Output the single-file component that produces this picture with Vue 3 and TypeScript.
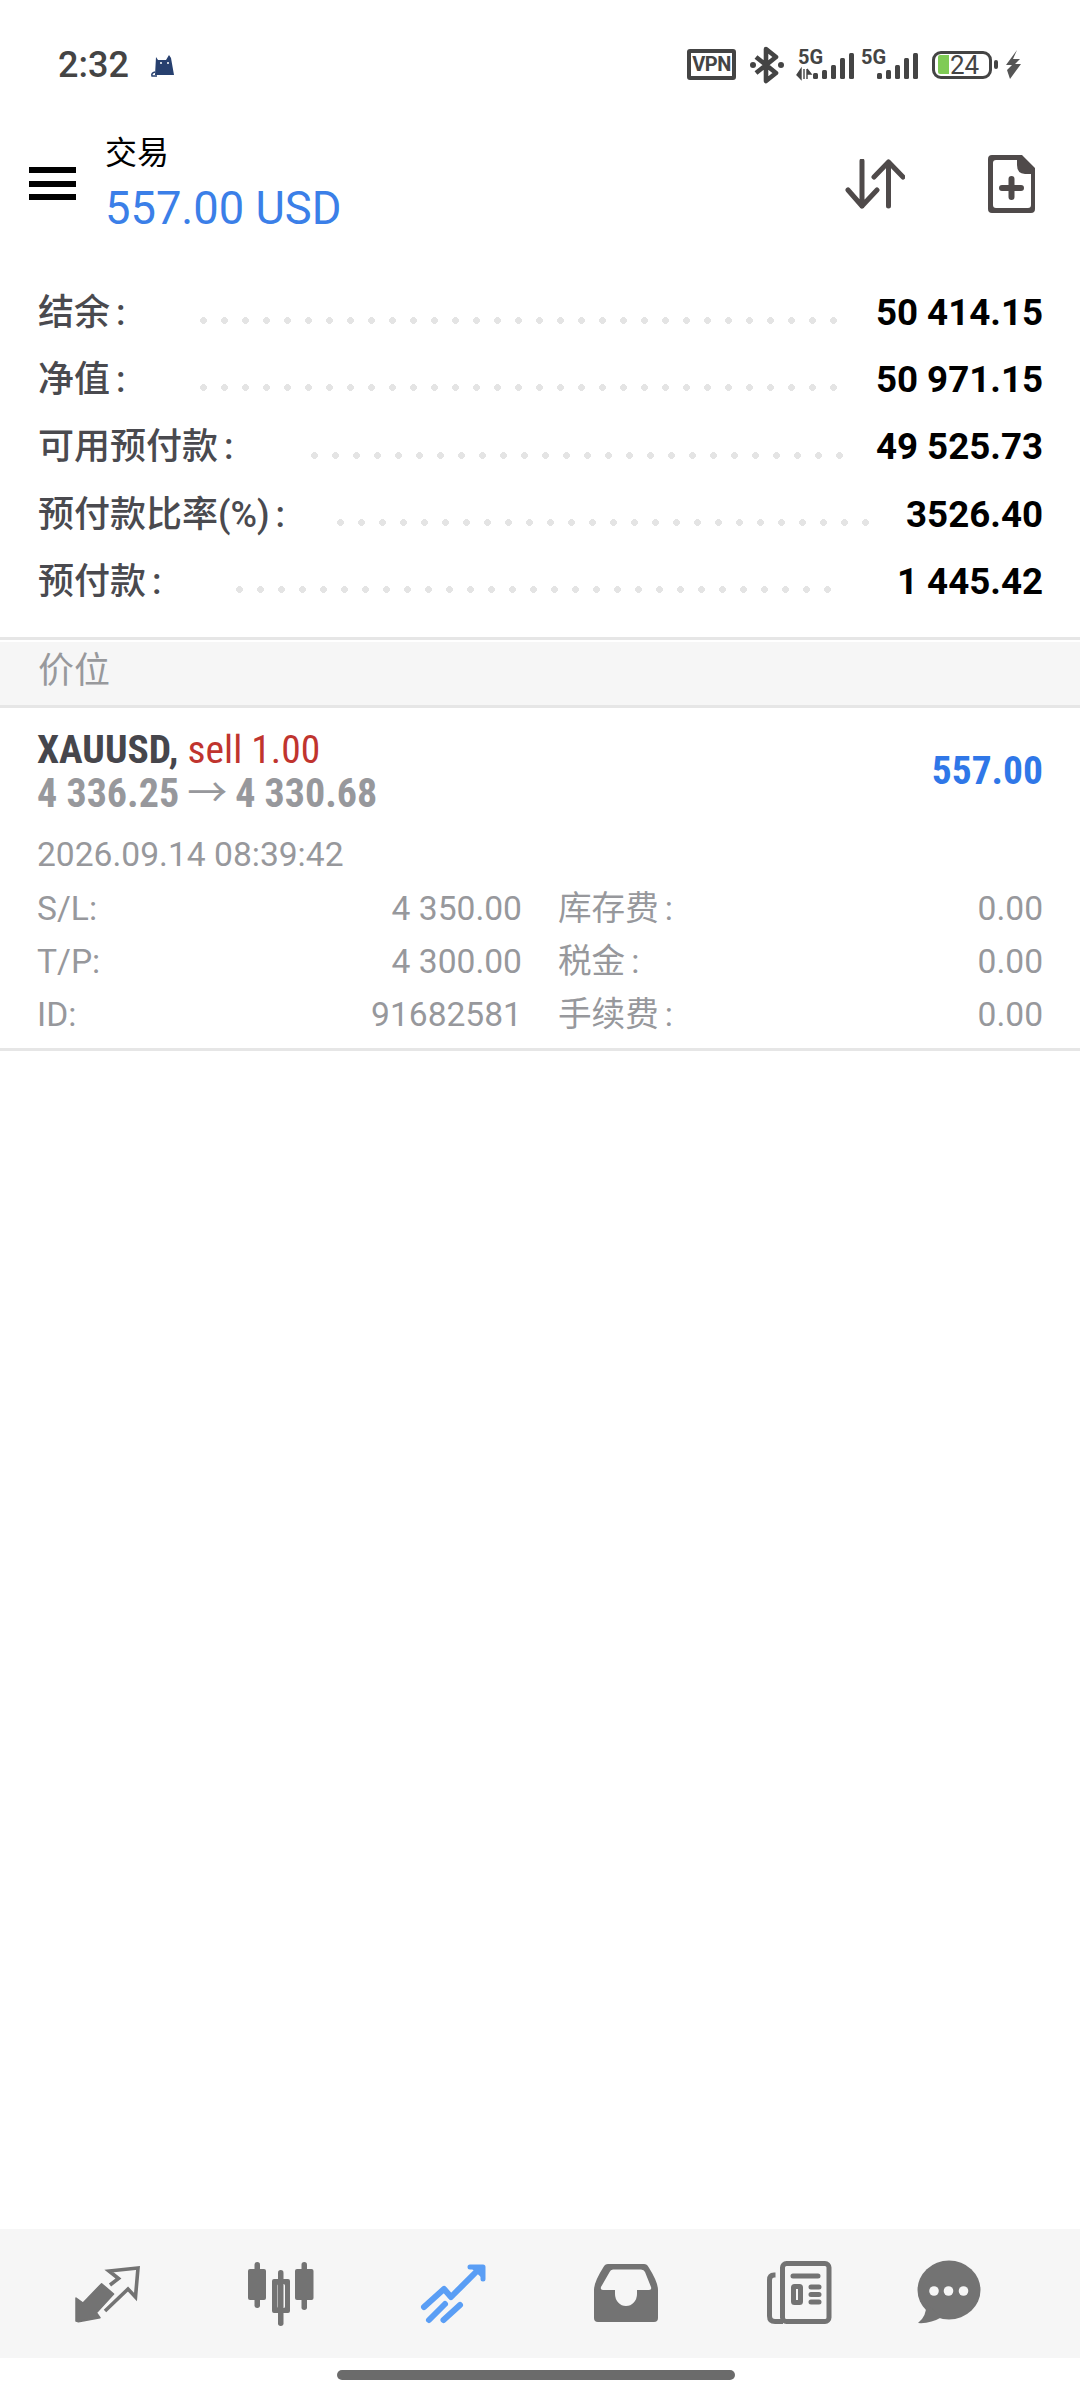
<template>
  <div class="screen">
    <!-- status bar -->
    <div class="status">
      <span class="clock">2:32</span>
      <span class="app-badge">
        <svg width="34" height="34" viewBox="0 0 34 34">
          <path d="M8 9 L10 12 H18 L21 7 L23 10 L26 27 H7 Z" fill="#27406f" />
          <path d="M7 24 Q3 25 4 28 H9" fill="none" stroke="#27406f" stroke-width="1.5" />
          <path d="M12 15 h2 M19 15 h2" stroke="#fff" stroke-width="1.4" />
        </svg>
      </span>
      <div class="status-icons">
        <span class="vpn">VPN</span>
        <svg class="bt" width="34" height="38" viewBox="0 0 34 38">
          <path d="M6 11 L26 27 L16 35 V3 L26 11 L6 27" fill="none" stroke="#444" stroke-width="4.6" stroke-linejoin="round" />
          <circle cx="3" cy="19" r="3" fill="#444" />
          <circle cx="31" cy="19" r="3" fill="#444" />
        </svg>
        <svg class="sig" width="58" height="41" viewBox="0 -6 58 41">
          <text x="2" y="14" class="sig-text">5G</text>
          <path d="M5 19 V29 L1 25 Z M8 19 V29 M11 19 V29 M11 19 L15 24 H11" fill="#444" stroke="#444" stroke-width="1.4" />
          <g fill="#444">
            <rect x="17" y="23" width="5" height="6" rx="1.5" />
            <rect x="26" y="20" width="5" height="9" rx="1.5" />
            <rect x="35" y="15" width="5" height="14" rx="1.5" />
            <rect x="44" y="8" width="5" height="21" rx="1.5" />
            <rect x="53" y="3" width="5" height="26" rx="1.5" />
          </g>
        </svg>
        <svg class="sig" width="58" height="41" viewBox="0 -6 58 41">
          <text x="1" y="14" class="sig-text">5G</text>
          <g fill="#444">
            <rect x="17" y="23" width="5" height="6" rx="1.5" />
            <rect x="26" y="20" width="5" height="9" rx="1.5" />
            <rect x="35" y="15" width="5" height="14" rx="1.5" />
            <rect x="44" y="8" width="5" height="21" rx="1.5" />
            <rect x="53" y="3" width="5" height="26" rx="1.5" />
          </g>
        </svg>
        <div class="battery">
          <span class="battery-fill"></span>
          <span class="battery-num">24</span>
        </div>
        <span class="battery-nub"></span>
        <svg class="bolt" width="17" height="29" viewBox="0 0 17 29">
          <path d="M12 0 L1 15 H7 L2 20 L5 29 L16 14 H10 L15 9 H8 Z" fill="#555" />
        </svg>
      </div>
    </div>

    <!-- top bar -->
    <header class="topbar">
      <div class="burger"><i></i><i></i><i></i></div>
      <div class="title">
        <div class="title-top">交易</div>
        <div class="title-profit">557.00 USD</div>
      </div>
      <svg class="sort" width="60" height="50" viewBox="0 0 60 50" fill="none" stroke="#4f4a4a" stroke-width="5" stroke-linecap="round" stroke-linejoin="round">
        <path d="M17 2 V47 M3 31 L17 47 L32 31" />
        <path d="M43.5 3 V47 M29 18 L43.5 3 L58 18" />
      </svg>
      <svg class="new-order" width="47" height="58" viewBox="0 0 47 58">
        <path fill="#4f4a4a" fill-rule="evenodd" d="M4 0 H34 L47 13 V54 Q47 58 43 58 H4 Q0 58 0 54 V4 Q0 0 4 0 Z M8 5 Q5 5 5 8 V50 Q5 53 8 53 H40 Q43 53 43 50 V19 H37 Q29 18.5 29 10 V5 Z" />
        <path d="M23.5 24 V42 M14 33 H33" stroke="#4f4a4a" stroke-width="6" stroke-linecap="round" />
      </svg>
    </header>

    <!-- account summary -->
    <section class="summary">
      <div v-for="row in summary" :key="row.label" class="sum-row">
        <span class="sum-label">{{ row.label }}<span class="colon">:</span></span>
        <span class="sum-dots" :style="{ marginLeft: row.gap + 'px', width: row.dots * 21 + 'px' }"></span>
        <span class="sum-value">{{ row.value }}</span>
      </div>
    </section>

    <div class="band"><span>价位</span></div>

    <!-- open position -->
    <section class="position">
      <div class="pos-head">
        <div class="pos-main">
          <div class="pos-line"><b class="sym">XAUUSD,</b> <span class="side">sell 1.00</span></div>
          <div class="pos-line prices"><b>4 336.25</b><span class="arrow">→</span><b>4 330.68</b></div>
        </div>
        <div class="pos-profit">557.00</div>
      </div>
      <div class="pos-time">2026.09.14 08:39:42</div>
      <div class="pos-grid">
        <div v-for="cell in details" :key="cell.label" class="cell">
          <span>{{ cell.label }}<span :class="{ colon: cell.cjk }">:</span></span>
          <span>{{ cell.value }}</span>
        </div>
      </div>
    </section>

    <div class="spacer"></div>

    <!-- bottom tabs -->
    <nav class="tabs">
      <svg class="tab" viewBox="0 0 64 64">
        <path d="M1 59 V36 L8 41 L26.6 21.7 L38.6 32 L21.4 50.7 L25 55.7 L3.5 59.7 Z" fill="#737373" stroke="#737373" stroke-width="1.5" stroke-linejoin="round" />
        <path d="M35 23 L43.5 16.5 L34 9 L63 6 L60.5 35 L53 27 L30 49" fill="none" stroke="#737373" stroke-width="3.6" />
      </svg>
      <svg class="tab" viewBox="0 0 64 64" fill="#737373">
        <rect x="6.5" y="0" width="5.5" height="46" rx="2.7" />
        <rect x="0" y="7" width="18" height="31" rx="2" />
        <rect x="30" y="8" width="5.5" height="56" rx="2.7" />
        <path fill-rule="evenodd" d="M26 17 H40 Q42 17 42 19 V49 Q42 51 40 51 H26 Q24 51 24 49 V19 Q24 17 26 17 Z M31 22 Q29.5 22 29.5 23.5 V44.5 Q29.5 46 31 46 H35.5 Q37 46 37 44.5 V23.5 Q37 22 35.5 22 Z" />
        <rect x="53.5" y="0" width="5.5" height="48" rx="2.7" />
        <rect x="47" y="7" width="18.5" height="31" rx="2" />
      </svg>
      <svg class="tab" viewBox="0 0 64 64" fill="none" stroke="#5a9ef5" stroke-width="6" stroke-linecap="round" stroke-linejoin="round">
        <path d="M3 45 L23 27 L30 35 L58 7" />
        <path d="M49 5 H62 V17" stroke-width="5" fill="#5a9ef5" />
        <path d="M8 58 L24 42 M22.5 58 L39 43" />
      </svg>
      <svg class="tab" viewBox="0 0 64 64">
        <path fill="#737373" fill-rule="evenodd" d="M14 2 H50 Q53 2 54.5 5 Q64 20 64 28 V56 Q64 60 60 60 H4 Q0 60 0 56 V28 Q0 20 9.5 5 Q11 2 14 2 Z M19 7.5 Q16.5 7.5 15.6 10 L7 25 Q6 28 9 28 H21 V32 A11 12 0 0 0 43 32 V28 H55 Q58 28 57 25 L51 10 Q50 7.5 47 7.5 Z" />
      </svg>
      <svg class="tab" viewBox="0 0 64 64" fill="none" stroke="#737373" stroke-width="5">
        <rect x="15.5" y="1.5" width="46.5" height="58" rx="4" />
        <path d="M8.5 13 H7 Q2.5 13 2.5 18 V54 Q2.5 59.5 8 59.5 H16" />
        <path d="M26 14 H51 M44 25 H52 M44 32.5 H52 M44 40 H52" stroke-linecap="round" />
        <rect x="26.5" y="24.5" width="7" height="16" rx="1" stroke-width="5" />
      </svg>
      <svg class="tab tab-chat" viewBox="0 0 64 64">
        <ellipse cx="31" cy="28" rx="31.5" ry="29.5" fill="#737373" />
        <path d="M8 42 Q9 54 0 61 Q12 62 24 55 Z" fill="#737373" />
        <circle cx="16" cy="29" r="4.8" fill="#f6f6f6" />
        <circle cx="30.5" cy="29" r="4.8" fill="#f6f6f6" />
        <circle cx="45.5" cy="29" r="4.8" fill="#f6f6f6" />
      </svg>
    </nav>

    <div class="home-area"><span class="home-bar"></span></div>
  </div>
</template>

<script setup lang="ts">
interface SummaryRow {
  label: string
  value: string
  gap: number
  dots: number
}

const summary: SummaryRow[] = [
  { label: '结余', value: '50 414.15', gap: 74, dots: 31 },
  { label: '净值', value: '50 971.15', gap: 74, dots: 31 },
  { label: '可用预付款', value: '49 525.73', gap: 77, dots: 26 },
  { label: '预付款比率(%)', value: '3526.40', gap: 52, dots: 26 },
  { label: '预付款', value: '1 445.42', gap: 74, dots: 29 },
]

const details = [
  { label: 'S/L', value: '4 350.00', cjk: false },
  { label: '库存费', value: '0.00', cjk: true },
  { label: 'T/P', value: '4 300.00', cjk: false },
  { label: '税金', value: '0.00', cjk: true },
  { label: 'ID', value: '91682581', cjk: false },
  { label: '手续费', value: '0.00', cjk: true },
]
</script>

<style>
html,
body {
  margin: 0;
  background: #fff;
}
</style>

<style scoped>
.screen {
  width: 1080px;
  height: 2400px;
  display: flex;
  flex-direction: column;
  background: #fff;
  font-family: Roboto, "Noto Sans CJK SC", sans-serif;
  overflow: hidden;
}

.status {
  height: 106px;
  padding: 23px 0 0 58px;
  box-sizing: border-box;
  display: flex;
  align-items: center;
  flex-shrink: 0;
}

.clock {
  font-size: 36px;
  font-weight: 500;
  color: #444;
  width: 90px;
}

.app-badge {
  width: 34px;
  height: 34px;
  display: block;
}

.status-icons {
  margin-left: auto;
  margin-right: 58px;
  display: flex;
  align-items: center;
}

.vpn {
  width: 49px;
  height: 31px;
  box-sizing: border-box;
  border: 4px solid #444;
  border-radius: 3px;
  font-size: 20px;
  font-weight: 700;
  line-height: 23px;
  text-align: center;
  color: #444;
  letter-spacing: -0.5px;
}

.bt {
  margin-left: 14px;
}

.sig {
  margin-left: 12px;
}

.sig + .sig {
  margin-left: 6px;
}

.sig-text {
  font-size: 20px;
  font-weight: 700;
  fill: #444;
  font-family: Roboto, sans-serif;
}

.battery {
  margin-left: 14px;
  width: 60px;
  height: 28px;
  box-sizing: border-box;
  border: 3.5px solid #444;
  border-radius: 9px;
  display: flex;
  align-items: center;
  padding-left: 3px;
}

.battery-fill {
  width: 11px;
  height: 19px;
  background: #7fcb55;
  border-radius: 2px 0 0 2px;
}

.battery-num {
  font-size: 26px;
  line-height: 20px;
  color: #444;
  margin-left: 1px;
}

.battery-nub {
  width: 4px;
  height: 9px;
  margin-left: 2px;
  background: #444;
  border-radius: 2px;
}

.bolt {
  margin-left: 7px;
}

.topbar {
  height: 132px;
  padding: 23px 45px 0 29px;
  box-sizing: border-box;
  display: flex;
  align-items: center;
  flex-shrink: 0;
}

.burger {
  width: 47px;
  display: flex;
  flex-direction: column;
  gap: 7.5px;
}

.burger i {
  display: block;
  height: 6px;
  background: #000;
}

.title {
  margin: 5px 0 0 29px;
  flex: 1;
}

.title-top {
  font-size: 32px;
  line-height: 40px;
  color: #000;
}

.title-profit {
  font-size: 45.3px;
  line-height: 60px;
  color: #3b7fe8;
  margin-top: 6px;
}

.sort {
  margin-right: 83px;
}

.summary {
  height: 399px;
  padding: 37px 37px 0 38px;
  box-sizing: border-box;
  flex-shrink: 0;
}

.sum-row {
  height: 67.3px;
  display: flex;
  align-items: center;
}

.sum-label {
  font-size: 36px;
  font-weight: 500;
  color: #4a4a4f;
}

.colon {
  margin-left: 6px;
}

.sum-dots {
  height: 7px;
  margin-top: 24px;
  background-image: radial-gradient(circle at 3.5px 3.5px, #e4e4e4 3.2px, transparent 3.6px);
  background-size: 21px 7px;
  background-repeat: repeat-x;
}

.sum-value {
  margin-left: auto;
  margin-top: 7px;
  font-size: 36.7px;
  font-weight: 700;
  color: #000;
}

.band {
  height: 71px;
  box-sizing: border-box;
  border-top: 3px solid #e6e6e6;
  border-bottom: 3px solid #e6e6e6;
  padding: 2px 0 0 38px;
  background: linear-gradient(#fff 2px, #f6f6f6 2px);
  font-size: 36px;
  line-height: 58px;
  color: #98999c;
  flex-shrink: 0;
}

.position {
  height: 343px;
  box-sizing: border-box;
  border-bottom: 3px solid #e6e6e6;
  padding: 20px 37px 0;
  flex-shrink: 0;
}

.pos-head {
  display: flex;
  align-items: center;
  justify-content: space-between;
}

.pos-line {
  font-size: 40px;
  line-height: 44px;
  font-stretch: 75%;
}

.sym,
.side {
  font-size: 39.5px;
}

.sym {
  color: #46464c;
  font-weight: 700;
}

.side {
  color: #c0342e;
}

.prices {
  color: #97989c;
}

.arrow {
  margin: 0 8px;
  font-weight: 400;
}

.pos-profit {
  font-size: 39.5px;
  font-weight: 700;
  font-stretch: 75%;
  color: #2f77e8;
  margin-top: -4px;
}

.pos-time {
  margin-top: 17px;
  font-size: 33.6px;
  line-height: 44px;
  color: #97989c;
}

.pos-grid {
  margin-top: 5px;
  display: grid;
  grid-template-columns: 485px 485px;
  column-gap: 36px;
  font-size: 33.6px;
  line-height: 53px;
  color: #97989c;
}

.cell {
  display: flex;
  justify-content: space-between;
}

.spacer {
  flex: 1;
}

.tabs {
  height: 129px;
  background: #f6f6f6;
  display: flex;
  align-items: center;
  gap: 109px;
  padding-left: 75px;
  flex-shrink: 0;
}

.tab {
  width: 64px;
  height: 64px;
  overflow: visible;
  flex-shrink: 0;
}

.tab-chat {
  margin-left: -22px;
}

.home-area {
  height: 42px;
  padding-left: 337px;
  padding-top: 12px;
  box-sizing: border-box;
  flex-shrink: 0;
}

.home-bar {
  display: block;
  width: 398px;
  height: 10px;
  border-radius: 5px;
  background: #6b6b6b;
}
</style>
